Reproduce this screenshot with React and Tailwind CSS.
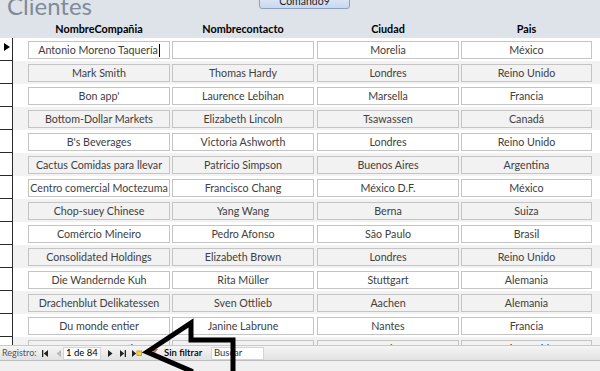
import React from "react";

const rows = [
  ["Antonio Moreno Taquería", "", "Morelia", "México"],
  ["Mark Smith", "Thomas Hardy", "Londres", "Reino Unido"],
  ["Bon app'", "Laurence Lebihan", "Marsella", "Francia"],
  ["Bottom-Dollar Markets", "Elizabeth Lincoln", "Tsawassen", "Canadá"],
  ["B's Beverages", "Victoria Ashworth", "Londres", "Reino Unido"],
  ["Cactus Comidas para llevar", "Patricio Simpson", "Buenos Aires", "Argentina"],
  ["Centro comercial Moctezuma", "Francisco Chang", "México D.F.", "México"],
  ["Chop-suey Chinese", "Yang Wang", "Berna", "Suiza"],
  ["Comércio Mineiro", "Pedro Afonso", "São Paulo", "Brasil"],
  ["Consolidated Holdings", "Elizabeth Brown", "Londres", "Reino Unido"],
  ["Die Wandernde Kuh", "Rita Müller", "Stuttgart", "Alemania"],
  ["Drachenblut Delikatessen", "Sven Ottlieb", "Aachen", "Alemania"],
  ["Du monde entier", "Janine Labrune", "Nantes", "Francia"],
  ["Eastern Connection", "Ann Devon", "Londres", "Reino Unido"],
];

const font = { fontFamily: "Lato, 'Open Sans', sans-serif" };

function Field({ children, className = "", cursor = false }) {
  return (
    <div
      className={`h-[18px] border border-[#c4c4c4] flex items-center justify-center text-[10.7px] text-[#404040] whitespace-nowrap overflow-hidden ${className}`}
    >
      <span>{children}</span>
      {cursor && <span className="inline-block w-[1px] h-[13px] bg-black ml-[1px]" />}
    </div>
  );
}

function Row({ r, i }) {
  const grey = i % 2 === 1;
  const bg = grey ? "bg-[#f2f2f2]" : "bg-white";
  return (
    <div className="flex h-[23px] shrink-0">
      <div className="w-[13px] shrink-0 bg-white border-r border-b border-[#2a2a2a] flex items-start pl-[4px] pt-[5px]">
        {i === 0 && (
          <svg width="6" height="8" viewBox="0 0 6 8">
            <polygon points="0,0 6,4 0,8" fill="#000" />
          </svg>
        )}
      </div>
      <div className={`flex-1 flex pt-[3px] pl-[15px] ${bg}`}>
        <Field className={`w-[142px] ${bg}`} cursor={i === 0}>
          {r[0]}
        </Field>
        <Field className={`w-[142px] ml-[2px] ${bg}`}>{r[1]}</Field>
        <Field className={`w-[142px] ml-[3px] ${bg}`}>{r[2]}</Field>
        <Field className={`w-[131px] ml-[2px] ${bg}`}>{r[3]}</Field>
      </div>
    </div>
  );
}

function NavIcon({ type }) {
  if (type === "first")
    return (
      <svg width="6" height="7" viewBox="0 0 6 7">
        <rect x="0" y="0" width="1.3" height="7" fill="#222" />
        <polygon points="6,0 1.8,3.5 6,7" fill="#222" />
      </svg>
    );
  if (type === "prev")
    return (
      <svg width="5" height="7" viewBox="0 0 5 7">
        <polygon points="5,0 0.5,3.5 5,7" fill="#b8b8b8" />
      </svg>
    );
  if (type === "next")
    return (
      <svg width="5" height="7" viewBox="0 0 5 7">
        <polygon points="0,0 4.5,3.5 0,7" fill="#222" />
      </svg>
    );
  if (type === "last")
    return (
      <svg width="6" height="7" viewBox="0 0 6 7">
        <polygon points="0,0 4.2,3.5 0,7" fill="#222" />
        <rect x="4.7" y="0" width="1.3" height="7" fill="#222" />
      </svg>
    );
  return (
    <svg width="10" height="7" viewBox="0 0 10 7">
      <polygon points="0,0 4.2,3.5 0,7" fill="#222" />
      <rect x="5" y="1" width="4.5" height="4.5" fill="#f5d547" stroke="#d9a01c" strokeWidth="1" />
    </svg>
  );
}

export default function App() {
  return (
    <div className="relative w-[600px] h-[371px] overflow-hidden flex flex-col bg-white" style={font}>
      {/* Header */}
      <div className="h-[38px] shrink-0 bg-[#dee3ea] flex flex-col">
        <div className="h-[20px] flex items-start">
          <div className="ml-[7px] -mt-[8px] text-[24px] leading-[28px] text-[#7f8b99] w-[245px] whitespace-nowrap">Clientes</div>
          <div className="ml-[7px] -mt-[11px] w-[91px] h-[20px] rounded-[3px] border border-[#8ea2c0] bg-gradient-to-b from-[#eef3fb] to-[#c9d8ee] flex items-end justify-center pb-[1px] text-[10.5px] leading-[11px] text-[#1e1e1e]">
            Comando9
          </div>
        </div>
        <div className="h-[18px] flex items-center pl-[28px] text-[10.8px] font-bold text-black">
          <div className="w-[142px] text-center">NombreCompañia</div>
          <div className="w-[142px] ml-[2px] text-center">Nombrecontacto</div>
          <div className="w-[142px] ml-[3px] text-center">Ciudad</div>
          <div className="w-[131px] ml-[2px] text-center">Pais</div>
        </div>
      </div>

      {/* Detail rows */}
      <div className="flex-1 flex flex-col overflow-hidden">
        {rows.map((r, i) => (
          <Row key={i} r={r} i={i} />
        ))}
      </div>

      {/* Navigation bar */}
      <div className="h-[15px] shrink-0 border-t border-[#c9c9c9] bg-gradient-to-b from-[#f5f5f5] to-[#e2e2e2] flex items-center text-[9px] text-[#444] whitespace-nowrap">
        <span className="ml-[2px] w-[33px] text-[#555]">Registro:</span>
        <span className="ml-[7px] flex items-center"><NavIcon type="first" /></span>
        <span className="ml-[8px] flex items-center"><NavIcon type="prev" /></span>
        <div className="ml-[2px] w-[38px] h-[13px] bg-white border border-[#d4d4d4] flex items-center pl-[2px] text-black text-[9.5px]">1 de 84</div>
        <span className="ml-[7px] flex items-center"><NavIcon type="next" /></span>
        <span className="ml-[7px] flex items-center"><NavIcon type="last" /></span>
        <span className="ml-[6px] flex items-center"><NavIcon type="new" /></span>
        <span className="ml-[9px] flex items-center">
          <svg width="7" height="8" viewBox="0 0 7 8">
            <polygon points="0,0 7,0 4.2,3.5 4.2,8 2.8,7 2.8,3.5" fill="#c86a5a" />
          </svg>
        </span>
        <span className="ml-[6px] w-[38px] text-black font-semibold text-[9.5px]">Sin filtrar</span>
        <div className="ml-[9px] w-[53px] h-[13px] bg-white border border-[#d4d4d4] flex items-center pl-[2px] text-[#333] text-[9.5px]">Buscar</div>
      </div>
      <div className="h-[11px] shrink-0 border-t border-[#bdbdbd] bg-[#f0f0f0]" />

      {/* Annotation arrow */}
      <svg className="absolute left-0 top-0 pointer-events-none" width="600" height="371" viewBox="0 0 600 371">
        <polygon
          points="147,352 191,323 191,340 233,340 233,400 191,400 191,371"
          fill="none"
          stroke="#000"
          strokeWidth="5"
          strokeLinejoin="miter"
        />
      </svg>
    </div>
  );
}
